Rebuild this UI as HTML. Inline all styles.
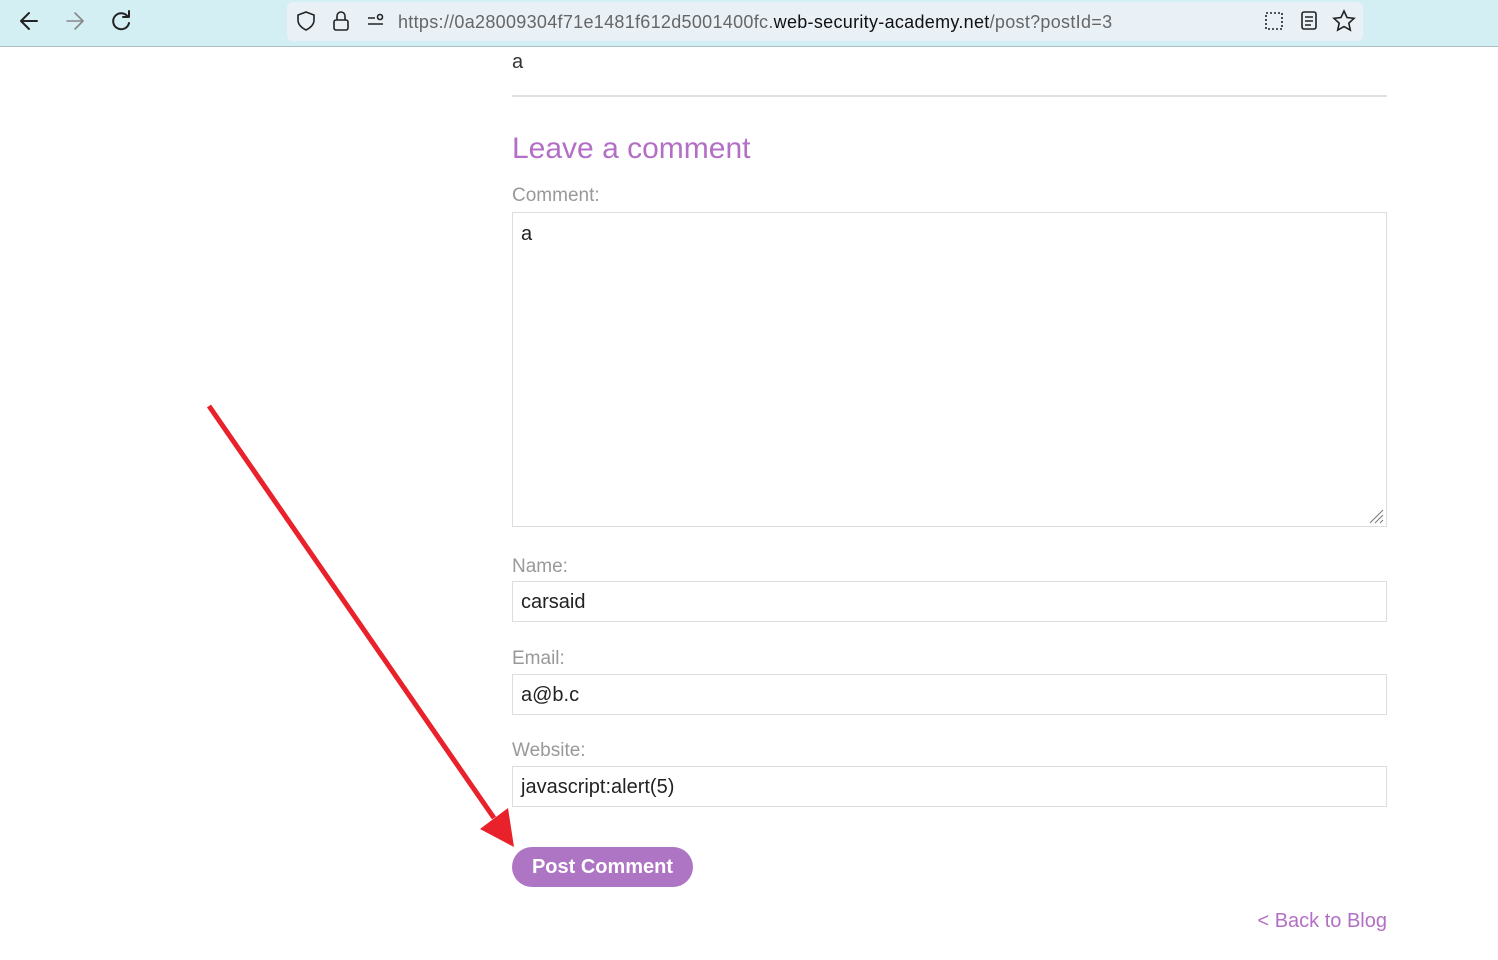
<!DOCTYPE html>
<html><head><style>
body{margin:0;width:1498px;height:960px;background:#fff;font-family:"Liberation Sans",sans-serif;position:relative;overflow:hidden}
.bar{position:absolute;left:0;top:0;width:1498px;height:46px;background:#d4eff4;border-bottom:1px solid #a9bfc4}
.url{position:absolute;left:287px;top:2px;width:1076px;height:39px;background:#e9f1f7;border-radius:6px}
.urltext{position:absolute;left:398px;top:12px;font-size:18px;color:#666;letter-spacing:0.3px;white-space:nowrap}
.urltext b{font-weight:normal;color:#111}
.lbl{position:absolute;left:512px;font-size:19px;color:#999}
.inp{position:absolute;left:512px;width:875px;border:1px solid #ddd;font-size:20px;color:#222;box-sizing:border-box;padding-left:8px}
</style></head><body>
<div class="bar">
<svg width="1498" height="46" style="position:absolute;left:0;top:0" fill="none" stroke-linecap="round" stroke-linejoin="round">
<path d="M21 21h16M29 13l-8 8 8 8" stroke="#222" stroke-width="2"/>
<path d="M67 21h16M75 13l8 8-8 8" stroke="#888" stroke-width="1.6"/>
<path d="M128 17a8 8 0 1 0 1 6M129 11v6h-6" stroke="#222" stroke-width="2"/>
</svg>
<div class="url"></div>
<svg width="1498" height="46" style="position:absolute;left:0;top:0" fill="none" stroke="#222" stroke-width="1.6">
<path d="M306 12l8 3v5c0 5-4 8-8 10-4-2-8-5-8-10v-5z"/>
<rect x="334" y="20" width="14" height="10" rx="2"/><path d="M337 20v-4a4 4 0 0 1 8 0v4"/>
<path d="M368 18h7M368 24h15"/><circle cx="380" cy="17" r="2.5"/><circle cx="370" cy="23" r="0"/>
<rect x="1266" y="13" width="16" height="16" stroke-dasharray="2 2"/>
<rect x="1302" y="12" width="14" height="17" rx="2"/><path d="M1305 17h8M1305 21h8M1305 25h6"/>
<path d="M1344 11l3 6.5 7 .8-5.2 4.8 1.5 7-6.3-3.6-6.3 3.6 1.5-7-5.2-4.8 7-.8z"/>
</svg>
<div class="urltext">https://0a28009304f71e1481f612d5001400fc.<b>web-security-academy.net</b>/post?postId=3</div>
</div>
<div style="position:absolute;left:512px;top:51px;font-size:20px;color:#333">a</div>
<div style="position:absolute;left:512px;top:95px;width:875px;height:2px;background:#e0e0e0"></div>
<div style="position:absolute;left:512px;top:132px;font-size:30px;color:#b36fc5">Leave a comment</div>
<div class="lbl" style="top:185px">Comment:</div>
<div class="inp" style="top:212px;height:315px;padding-top:10px">a
<svg width="16" height="16" style="position:absolute;right:2px;bottom:2px" stroke="#777"><path d="M2 15L15 2M7 15L15 7M12 15l3-3"/></svg></div>
<div class="lbl" style="top:556px">Name:</div>
<div class="inp" style="top:581px;height:41px;line-height:41px">carsaid</div>
<div class="lbl" style="top:648px">Email:</div>
<div class="inp" style="top:674px;height:41px;line-height:41px">a@b.c</div>
<div class="lbl" style="top:740px">Website:</div>
<div class="inp" style="top:766px;height:41px;line-height:41px">javascript:alert(5)</div>
<div style="position:absolute;left:512px;top:847px;width:181px;height:40px;border-radius:20px;background:#ad75c3;color:#fff;font-weight:bold;font-size:20px;text-align:center;line-height:41px">Post Comment</div>
<div style="position:absolute;right:111px;top:910px;font-size:20px;color:#b36fc5">&lt; Back to Blog</div>
<svg width="1498" height="960" style="position:absolute;left:0;top:0">
<path d="M209 406L494 818" stroke="#e8212b" stroke-width="5"/>
<path d="M514 847L480 829L508 808Z" fill="#e8212b"/>
</svg>
</body></html>
